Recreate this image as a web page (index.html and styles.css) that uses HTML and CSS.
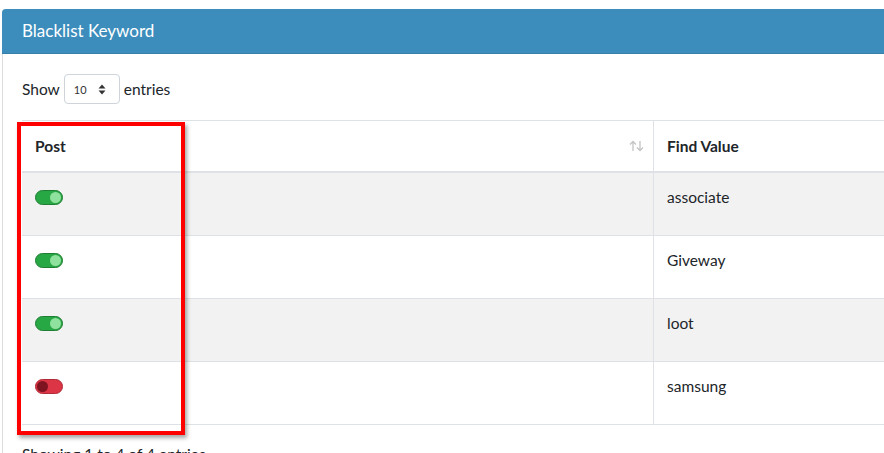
FILE: index.html
```html
<!DOCTYPE html>
<html lang="en">
<head>
    <meta charset="UTF-8">
    <meta name="viewport" content="width=device-width, initial-scale=1.0">
    <title>Blacklist Keyword</title>
    <link rel="stylesheet" href="styles.css">
</head>
<body>
    <div class="card">
        <div class="card-header">Blacklist Keyword</div>
        <div class="card-body">
            <div class="length-row">
                <span>Show</span>
                <span class="select-box">
                    <span>10</span>
                    <svg class="caret" width="8" height="11" viewBox="0 0 8 11">
                        <path d="M4 0.5 L7.5 4.5 H0.5 Z M4 10.5 L7.5 6.5 H0.5 Z" fill="#333"/>
                    </svg>
                </span>
                <span>entries</span>
            </div>

            <div class="table-wrap">
                <table class="data-table">
                    <thead>
                        <tr>
                            <th class="col-post">
                                <div class="th-inner">
                                    <span>Post</span>
                                    <svg class="sort-icon" width="15" height="12" viewBox="0 0 15 12">
                                        <path d="M4 11 V1.5 M1 4.5 L4 1.5 L7 4.5" stroke="#c4c4c4" stroke-width="1.3" fill="none"/>
                                        <path d="M11 1 V10.5 M8 7.5 L11 10.5 L14 7.5" stroke="#c4c4c4" stroke-width="1.3" fill="none"/>
                                    </svg>
                                </div>
                            </th>
                            <th class="col-find">Find Value</th>
                            <th class="col-rest"></th>
                        </tr>
                    </thead>
                    <tbody>
                        <tr class="odd">
                            <td><span class="toggle on"></span></td>
                            <td>associate</td>
                            <td></td>
                        </tr>
                        <tr>
                            <td><span class="toggle on"></span></td>
                            <td>Giveway</td>
                            <td></td>
                        </tr>
                        <tr class="odd">
                            <td><span class="toggle on"></span></td>
                            <td>loot</td>
                            <td></td>
                        </tr>
                        <tr>
                            <td><span class="toggle off"></span></td>
                            <td>samsung</td>
                            <td></td>
                        </tr>
                    </tbody>
                </table>
                <div class="highlight"></div>
            </div>

            <div class="info">Showing 1 to 4 of 4 entries</div>
        </div>
    </div>
</body>
</html>
```

FILE: styles.css
```css
body {
    margin: 0;
    padding: 9px 0 0 2px;
    background: #ffffff;
    font-family: "Source Sans Pro", Lato, "Liberation Sans", sans-serif;
    font-size: 15.5px;
    color: #212529;
    overflow: hidden;
    height: 453px;
    box-sizing: border-box;
}

.card {
    width: 1300px;
    border: 1px solid #dcdcdc;
    border-top: none;
    border-radius: 4px 4px 0 0;
    background: #ffffff;
}

.card-header {
    background: #3c8dbc;
    color: #ffffff;
    font-size: 17px;
    height: 44px;
    line-height: 44px;
    padding-left: 20px;
    border-bottom: 1px solid #367fa9;
    border-radius: 4px 4px 0 0;
    margin: 0 -1px;
}

.card-body {
    padding: 20px 0 0 19px;
}

.length-row {
    display: flex;
    align-items: center;
    gap: 4px;
    height: 30px;
}

.select-box {
    display: flex;
    align-items: center;
    justify-content: space-between;
    box-sizing: border-box;
    width: 56px;
    height: 30px;
    padding: 0 13px 0 9px;
    border: 1px solid #ced4da;
    border-radius: 4px;
    font-size: 11px;
    color: #333;
}

.table-wrap {
    position: relative;
    margin-top: 16px;
}

.data-table {
    border-collapse: collapse;
    table-layout: fixed;
    width: 1100px;
}

.data-table th,
.data-table td {
    text-align: left;
    padding: 0 13px;
    border-left: 1px solid #dee2e6;
}

.data-table th:first-child,
.data-table td:first-child {
    border-left: none;
}

.data-table th {
    height: 50px;
    font-weight: bold;
    border-top: 1px solid #dee2e6;
    border-bottom: 2px solid #dee2e6;
}

.col-post { width: 605px; }
.col-find { width: 300px; }

.th-inner {
    display: flex;
    align-items: center;
    justify-content: space-between;
}

.sort-icon {
    margin-right: -4px;
}

.data-table td {
    height: 63px;
    vertical-align: top;
    padding-top: 14px;
    box-sizing: border-box;
    border-bottom: 1px solid #dee2e6;
    line-height: 20px;
}

.data-table tr.odd td {
    background: #f2f2f2;
}

.toggle {
    display: inline-block;
    position: relative;
    box-sizing: border-box;
    width: 28px;
    height: 15px;
    border-radius: 8px;
    margin-top: 3px;
    vertical-align: top;
}

.toggle::after {
    content: '';
    position: absolute;
    top: 1px;
    width: 11px;
    height: 11px;
    border-radius: 50%;
}

.toggle.on {
    background: #28a745;
    border: 1px solid #1e7e34;
}

.toggle.on::after {
    right: 1px;
    background: #8fe19e;
}

.toggle.off {
    background: #dc3545;
    border: 1px solid #b02a37;
}

.toggle.off::after {
    left: 1px;
    background: #7d1420;
}

.highlight {
    position: absolute;
    left: -5px;
    top: 2px;
    width: 160px;
    height: 305px;
    border: 4px solid #ff0000;
    box-shadow: 2px 3px 4px rgba(0, 0, 0, 0.35);
    pointer-events: none;
}

.info {
    margin-top: 20px;
}
```
